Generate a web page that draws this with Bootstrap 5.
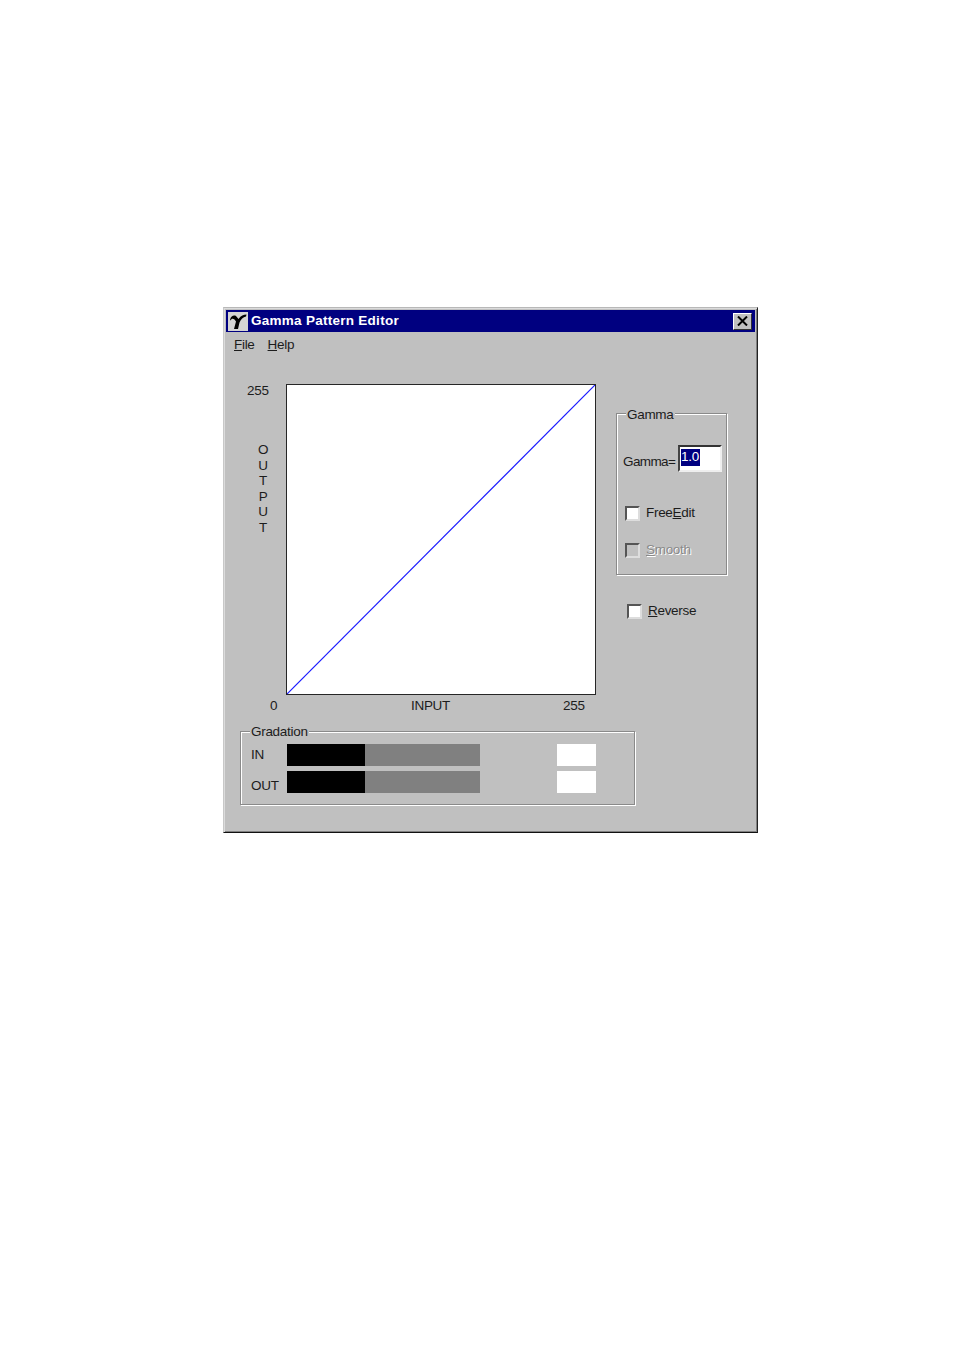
<!DOCTYPE html>
<html lang="en">
<head>
<meta charset="utf-8">
<title>Gamma Pattern Editor</title>
<link href="https://cdn.jsdelivr.net/npm/bootstrap@5.3.0/dist/css/bootstrap.min.css" rel="stylesheet">
<style>
html,body{background:#fff;margin:0;height:1351px;overflow:hidden}
body{font-family:"Liberation Sans",Arial,sans-serif;font-size:13.5px;line-height:16px;color:#1c1c1c;letter-spacing:-.3px}
.win-frame{margin:307px 0 0 223px;width:535px;height:526px;background:#c0c0c0;padding:2px;border:1px solid;border-color:#b8b8b8 #222 #111 #c8c8c8;box-shadow:inset 1px 1px 0 #dcdcdc,inset -1px -1px 0 #808080;box-sizing:border-box}
.title-bar{height:22px;background:#000080;color:#fff;font-weight:700;font-size:13.5px;letter-spacing:.27px;padding:0 2px}
.app-ico{width:20px;height:19px;margin-right:3px;display:block;flex:none}
.close-btn{width:19px;height:17px;background:#c0c0c0;margin-right:1px;border:1px solid;border-color:#fff #333 #333 #fff;display:flex;align-items:center;justify-content:center}
.menu-row{height:26px;padding-left:8px;gap:13px}
.main-row{margin-top:26px;height:311px}
.y-axis{width:60px;flex:none}
.y-top{padding-left:21px;margin-top:-1px}
.y-word{margin-top:43px;width:74px;line-height:15.6px;text-align:center}
.plot{width:310px;height:311px;flex:none;background:#fff;border:1px solid #262626}
.plot svg{display:block}
.side-col{margin-left:20px;width:112px;padding-top:29px}
.etched{border:1px solid #8a8a8a;box-shadow:1px 1px 0 #fff,inset 1px 1px 0 #fff;position:relative}
.group-label{position:absolute;background:#c0c0c0;padding:0 1px;left:9px}
.gamma-label{top:-7px}
.grad-label{top:-8px}
.gamma-box{width:111px;height:162px;padding:31px 0 0 6px}
.gamma-line{height:27px;gap:4px}
.gamma-text{width:51px;flex:none;margin-top:6px;letter-spacing:-.6px}
.text-field{width:44px;height:27px;background:#fff;border:2px solid;border-color:#333 #eee #eee #444;padding:2px 0 0 1px;flex:none}
.sel-text{display:inline-block;background:#000080;color:#fff;width:19px;height:17px;letter-spacing:-.3px;line-height:16px}
.chk-line{gap:6px;margin-left:2px}
.chk-box{width:15px;height:15px;background:#fff;border:2px solid;border-color:#555 #ddd #ddd #555;flex:none}
.chk-off{background:#c0c0c0}
.free-line{margin-top:33px}
.smooth-line{margin-top:21px;color:#8a8a8a;text-shadow:1px 1px 0 #fff}
.rev-line{margin:28px 0 0 11px;gap:6px}
.x-row{height:36px;padding-top:3px}
.x-zero{margin-left:44px;width:141px}
.x-input{width:152px}
.gradation{margin-left:14px;width:395px;height:74px;padding:12px 0 0 10px}
.meter-row{height:22px;margin-bottom:5px}
.meter-name{width:36px;flex:none}
.meter-low{margin-top:8px}
.meter{width:193px;height:22px;background:#808080;flex:none;margin-right:77px}
.meter-fill{height:100%;background:#000;width:78px}
.value-box{width:39px;height:22px;background:#fff;flex:none}
</style>
</head>
<body>
<div class="win-frame">
  <div class="title-bar d-flex align-items-center">
    <svg class="app-ico" viewBox="0 0 20 19" aria-hidden="true">
      <rect width="20" height="19" fill="#d4d4d4"/>
      <path d="M2 8C3 3.500 6 3 8 4L10.500 7C13 3.500 15.500 2.500 18.500 2.500L18 4.500C15 5 13 7.500 11.500 10.500L10 17L6 17L8 9.500L6.500 7.500C5 6.500 3.500 6.500 2.500 8.500Z" fill="#000"/>
    </svg>
    <span class="flex-grow-1">Gamma Pattern Editor</span>
    <span class="close-btn"><svg width="11" height="10" viewBox="0 0 11 10" aria-hidden="true"><path d="M1 .5L10 9.500M10 .5L1 9.500" stroke="#000" stroke-width="2"/></svg></span>
  </div>
  <div class="menu-row d-flex align-items-center">
    <span><u>F</u>ile</span>
    <span><u>H</u>elp</span>
  </div>
  <div class="main-row d-flex">
    <div class="y-axis">
      <div class="y-top">255</div>
      <div class="y-word">O<br>U<br>T<br>P<br>U<br>T</div>
    </div>
    <div class="plot">
      <svg width="308" height="309" viewBox="0 0 308 309" aria-hidden="true"><path d="M0 309L308 0" stroke="#1a1aff" stroke-width="1.200" fill="none"/></svg>
    </div>
    <div class="side-col">
      <div class="etched gamma-box">
        <span class="group-label gamma-label">Gamma</span>
        <div class="gamma-line d-flex align-items-center">
          <span class="gamma-text">Gamma=</span>
          <div class="text-field"><span class="sel-text">1.0</span></div>
        </div>
        <div class="chk-line free-line d-flex align-items-center"><span class="chk-box"></span><span>Free<u>E</u>dit</span></div>
        <div class="chk-line smooth-line d-flex align-items-center"><span class="chk-box chk-off"></span><span><u>S</u>mooth</span></div>
      </div>
      <div class="rev-line d-flex align-items-center"><span class="chk-box"></span><span><u>R</u>everse</span></div>
    </div>
  </div>
  <div class="x-row d-flex">
    <span class="x-zero">0</span>
    <span class="x-input">INPUT</span>
    <span>255</span>
  </div>
  <div class="etched gradation">
    <span class="group-label grad-label">Gradation</span>
    <div class="meter-row d-flex align-items-center">
      <span class="meter-name">IN</span>
      <div class="meter"><div class="meter-fill"></div></div>
      <div class="value-box"></div>
    </div>
    <div class="meter-row d-flex align-items-center">
      <span class="meter-name meter-low">OUT</span>
      <div class="meter"><div class="meter-fill"></div></div>
      <div class="value-box"></div>
    </div>
  </div>
</div>
<script src="https://cdn.jsdelivr.net/npm/bootstrap@5.3.0/dist/js/bootstrap.bundle.min.js"></script>
</body>
</html>
